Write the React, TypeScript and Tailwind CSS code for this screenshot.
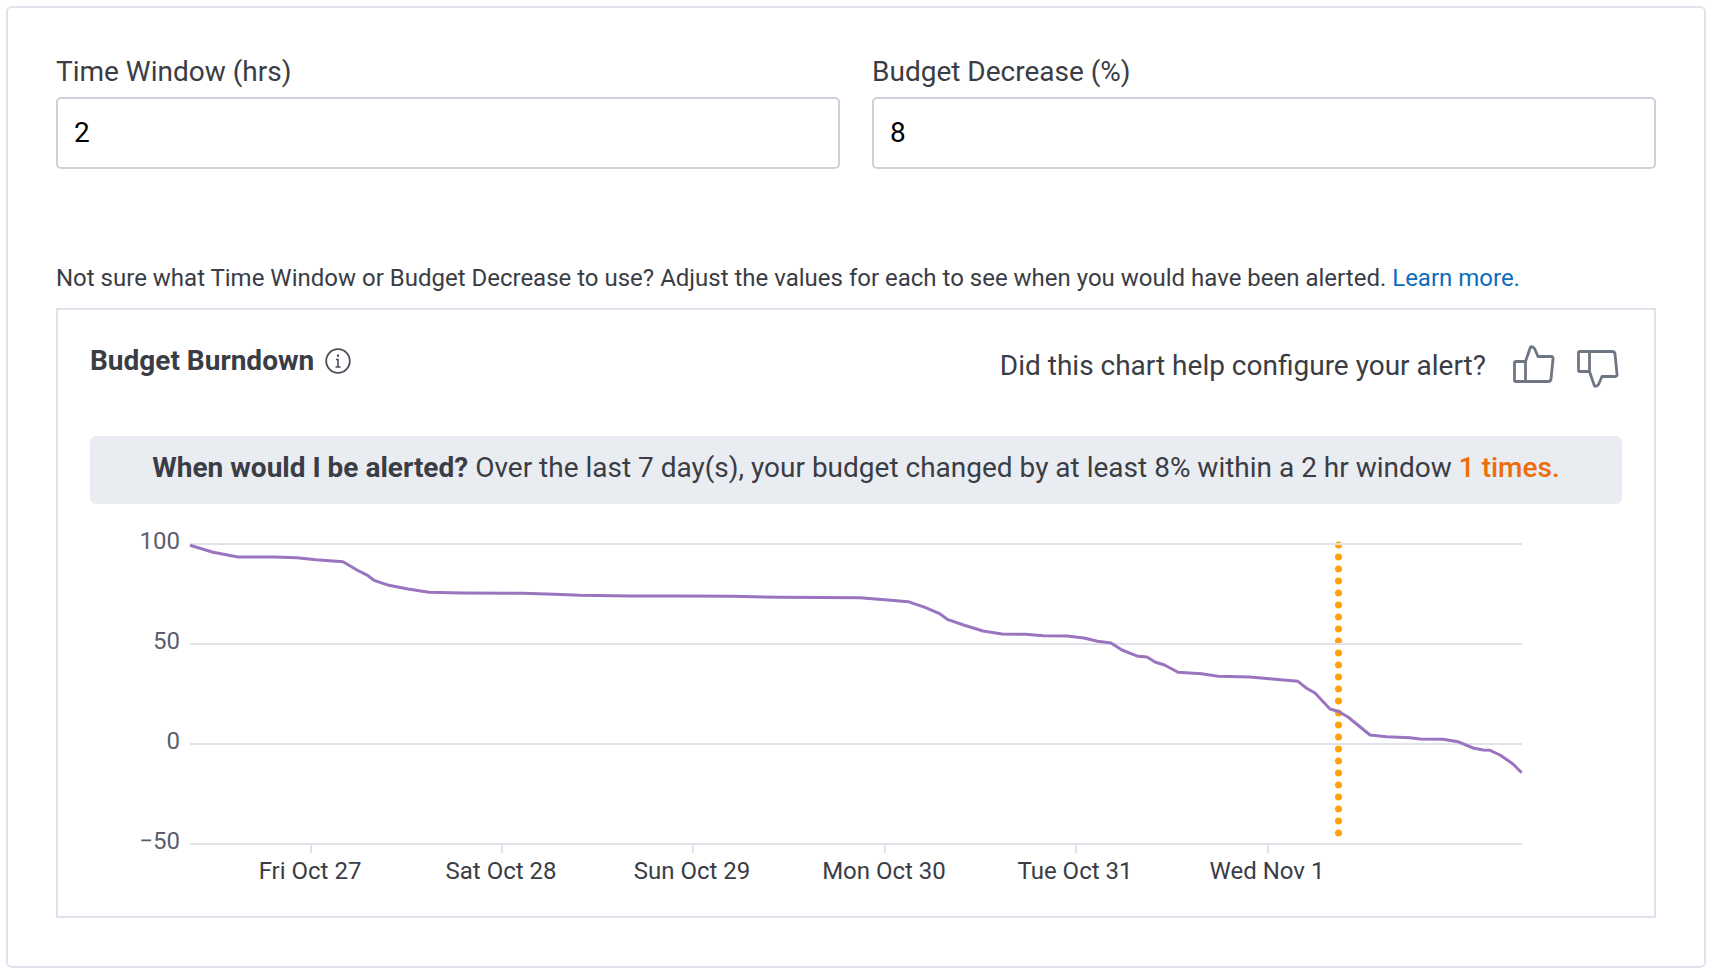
const points = [
  [190, 545.3], [213, 552.3], [238, 557], [274, 557], [297, 557.7], [316, 559.7], [343, 561.7], [357, 570],
  [368, 575.7], [374, 580.3], [389, 585.3], [408, 589], [429, 592.3], [462, 593], [523, 593.3], [554, 594.3],
  [580, 595.3], [630, 596], [676, 596], [734, 596.3], [780, 597.3], [860, 597.7], [891, 600.3], [908, 601.7],
  [925, 607.3], [939, 613.3], [948, 619.7], [963.6, 625], [983, 631], [1002, 634], [1025, 634.3], [1044, 635.7],
  [1067, 636], [1084, 638], [1097.5, 641.3], [1111, 643], [1122, 650], [1138, 656.3], [1147, 657], [1155, 662],
  [1164.5, 665], [1178, 672.3], [1201.7, 673.7], [1218, 676.3], [1250, 677], [1275, 679.3], [1298, 681.3],
  [1306.7, 688.3], [1315, 693], [1330, 709], [1338, 711.3], [1348, 717], [1370, 735], [1386.7, 736.7],
  [1410, 737.7], [1420, 739], [1443, 739.3], [1458, 741.7], [1473, 748], [1483, 750], [1490, 750.3],
  [1500, 755], [1513, 764], [1521.7, 772.7],
];

const yTicks = [
  { label: "100", y: 544 },
  { label: "50", y: 644 },
  { label: "0", y: 744 },
  { label: "−50", y: 844 },
];

const xTicks = [
  { label: "Fri Oct 27", x: 311 },
  { label: "Sat Oct 28", x: 502 },
  { label: "Sun Oct 29", x: 693 },
  { label: "Mon Oct 30", x: 885 },
  { label: "Tue Oct 31", x: 1076 },
  { label: "Wed Nov 1", x: 1268 },
];

function Field({ label, value }: { label: string; value: string }) {
  return (
    <div className="flex-1">
      <label className="block text-[28px] leading-[34px] text-[#3a3d45] mb-[8px]">{label}</label>
      <div className="h-[72px] border-2 border-[#cdd1dc] rounded-[5px] px-[16px] flex items-center text-[28px] text-black">
        {value}
      </div>
    </div>
  );
}

function Thumb({ down }: { down?: boolean }) {
  return (
    <svg width="42" height="38" viewBox="0 0 42 38" fill="none" stroke="#6f7683" strokeWidth="2.8" strokeLinejoin="round" className={down ? "-scale-y-100 mt-[2px]" : "-mt-[3px]"}>
      <path d="M12.5 16.5 L17.5 2 Q19.5 1 21.5 3.5 L25 11.5 H38 Q40.5 11.5 40 14 L38 34 Q37.7 36.5 35 36.5 H3 Q1.5 36.5 1.5 35 V18 Q1.5 16.5 3 16.5 H12.5 V36.5" />
    </svg>
  );
}

function Chart() {
  return (
    <svg width="1535" height="400" viewBox="90 510 1535 400" className="block mt-[6px] font-['Roboto',sans-serif]">
      <line x1="1338.5" y1="545" x2="1338.5" y2="838" stroke="#ffa20d" strokeWidth="7" strokeLinecap="round" strokeDasharray="0 12" />
      {yTicks.map((t) => (
        <g key={t.label}>
          <line x1="190" x2="1522" y1={t.y} y2={t.y} stroke="#e1e2ea" strokeWidth="2" />
          <text x="180" y={t.y + 5} textAnchor="end" fontSize="24" fill="#5a5f6b">{t.label}</text>
        </g>
      ))}
      {xTicks.map((t) => (
        <g key={t.label}>
          <line x1={t.x} x2={t.x} y1="844" y2="853" stroke="#e1e2ea" strokeWidth="2" />
          <text x={t.x - 1} y="879" textAnchor="middle" fontSize="24" fill="#3a3d45">{t.label}</text>
        </g>
      ))}
      <polyline points={points.map((p) => p.join(",")).join(" ")} fill="none" stroke="#9b74c0" strokeWidth="3" strokeLinejoin="round" />
    </svg>
  );
}

export default function App() {
  return (
    <div className="h-[976px] bg-white p-[6px] font-['Roboto',sans-serif] text-[#3a3d45]">
      <div className="h-[962px] w-[1700px] border-2 border-[#e1e2ee] rounded-[6px] px-[48px] pt-[47px]">
        <div className="flex gap-[32px]">
          <Field label="Time Window (hrs)" value="2" />
          <Field label="Budget Decrease (%)" value="8" />
        </div>

        <p className="mt-[94px] text-[24px] leading-[30px]">
          Not sure what Time Window or Budget Decrease to use? Adjust the values for each to see when you would have been alerted.{" "}
          <a href="#" className="text-[#0f6cbd]">Learn more.</a>
        </p>

        <div className="mt-[15px] h-[610px] border-2 border-[#e1e2ee] px-[32px] pt-[33px]">
          <div className="flex justify-between h-[93px]">
            <div className="flex items-start gap-[11px]">
              <span className="text-[28px] leading-[36px] font-bold">Budget Burndown</span>
              <svg width="26" height="26" viewBox="0 0 26 26" fill="none" stroke="#4a4e59" strokeWidth="1.8" className="mt-[5px]">
                <circle cx="13" cy="13" r="11.8" />
                <path d="M11 11.5 H13 V19 M10.5 19 H15.5" strokeWidth="1.6" />
                <path d="M13 6.5 V8.8" strokeWidth="2" />
              </svg>
            </div>
            <div className="flex items-start gap-[27px] pt-[5px] pr-[3px]">
              <span className="text-[28px] leading-[36px]">Did this chart help configure your alert?</span>
              <div className="flex items-start gap-[22px]">
                <Thumb />
                <Thumb down />
              </div>
            </div>
          </div>

          <div className="h-[68px] pb-[4px] bg-[#e9ecf1] rounded-[6px] flex items-center justify-center text-[28px]">
            <span>
              <b className="font-bold">When would I be alerted?</b> Over the last 7 day(s), your budget changed by at least 8% within a 2 hr window{" "}
              <span className="text-[#ef6c0a] font-medium">1 times.</span>
            </span>
          </div>

          <Chart />
        </div>
      </div>
    </div>
  );
}
